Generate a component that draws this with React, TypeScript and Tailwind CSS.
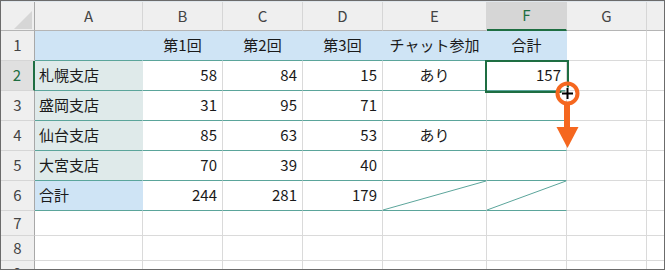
import React from 'react'

const widths = ['w-[34px]', 'w-[108px]', 'w-[80px]', 'w-[80px]', 'w-[80px]', 'w-[104px]', 'w-[80px]', 'w-[80px]']
const letters = ['A', 'B', 'C', 'D', 'E', 'F', 'G']

type Cell = string | number | null | 'DIAG'

const data: Cell[][] = [
  [null, '第1回', '第2回', '第3回', 'チャット参加', '合計'],
  ['札幌支店', 58, 84, 15, 'あり', 157],
  ['盛岡支店', 31, 95, 71, null, null],
  ['仙台支店', 85, 63, 53, 'あり', null],
  ['大宮支店', 70, 39, 40, null, null],
  ['合計', 244, 281, 179, 'DIAG', 'DIAG'],
]

const Diagonal: React.FC = () => (
  <svg className="absolute inset-0 w-full h-full" preserveAspectRatio="none" viewBox="0 0 100 100">
    <line x1="0" y1="100" x2="100" y2="0" stroke="#5ba59b" strokeWidth="1" vectorEffect="non-scaling-stroke" />
  </svg>
)

function cellBg(r: number, c: number) {
  if (r === 0 && c <= 5) return 'bg-[#cfe4f5] border-r-[#cfe4f5]'
  if (r === 5 && c === 0) return 'bg-[#cfe4f5] border-r-[#cfe4f5]'
  if (c === 0) return 'bg-[#dfeaea] border-r-[#dfeaea]'
  return 'bg-white border-r-[#dadada]'
}

const App: React.FC = () => {
  return (
    <div
      className="w-[665px] h-[270px] border border-[#6b6b6b] overflow-hidden relative bg-white text-[15px] text-[#1a1a1a]"
      style={{ fontFamily: '"Noto Sans CJK JP", "Noto Sans", sans-serif' }}
    >
      {/* column header */}
      <div className="flex h-[30px] bg-[#efefef] border-t border-t-[#dfe6ec]">
        <div className="w-[34px] shrink-0 border-r border-r-[#a8a8a8] border-b border-b-[#b5b5b5] relative">
          <svg className="absolute left-[13px] top-[9px]" width="18" height="18" viewBox="0 0 18 18">
            <polygon points="18,0 18,18 0,18" fill="#d6d6d6" />
          </svg>
        </div>
        {letters.map((l, i) => (
          <div
            key={l}
            className={`${widths[i + 1]} shrink-0 flex items-center justify-center border-r border-r-[#d6d6d6] ${
              l === 'F'
                ? 'bg-[#d6d6d6] text-[#1e6e42] border-b-2 border-b-[#1e6e42]'
                : 'text-[#444] border-b border-b-[#b5b5b5]'
            }`}
          >
            {l}
          </div>
        ))}
        <div className="flex-1 border-b border-b-[#b5b5b5]" />
      </div>

      {/* table rows */}
      {data.map((row, r) => (
        <div key={r} className="flex h-[30px]">
          <div
            className={`w-[34px] shrink-0 flex items-center justify-center border-b border-b-[#d6d6d6] ${
              r === 1
                ? 'bg-[#e0e0e0] text-[#1e6e42] border-r-2 border-r-[#1e6e42]'
                : 'bg-[#efefef] text-[#444] border-r border-r-[#a8a8a8]'
            }`}
          >
            {r + 1}
          </div>
          {row.map((v, c) => {
            const isNum = typeof v === 'number'
            const align =
              c === 0 ? 'justify-start pl-[4px]' : isNum ? 'justify-end pr-[5px]' : 'justify-center'
            return (
              <div
                key={c}
                className={`${widths[c + 1]} shrink-0 relative flex items-center border-r border-b border-b-[#5ba59b] ${align} ${cellBg(r, c)}`}
              >
                {v === 'DIAG' ? <Diagonal /> : v}
              </div>
            )
          })}
          <div className="w-[80px] shrink-0 border-r border-b border-[#dadada]" />
          <div className="flex-1 border-b border-[#dadada]" />
        </div>
      ))}

      {[7, 8, 9].map((n) => (
        <div key={n} className="flex h-[25px]">
          <div className="w-[34px] shrink-0 flex items-center justify-center bg-[#efefef] text-[#444] border-r border-r-[#a8a8a8] border-b border-b-[#d6d6d6]">
            {n}
          </div>
          {widths.slice(1).map((w, i) => (
            <div key={i} className={`${w} shrink-0 border-r border-b border-[#dadada]`} />
          ))}
          <div className="flex-1 border-b border-[#dadada]" />
        </div>
      ))}

      {/* selected cell F2 */}
      <div className="absolute left-[484px] top-[59px] w-[84px] h-[33px] border-2 border-[#1e6e42]" />

      {/* drag annotation */}
      <svg className="absolute left-0 top-0 pointer-events-none" width="665" height="270">
        <rect x="563" y="102" width="6" height="26" fill="#f5671f" />
        <polygon points="555.5,126 577.5,126 566.5,147" fill="#f5671f" />
        <circle cx="566.5" cy="92.5" r="10" fill="none" stroke="#f5671f" strokeWidth="4" />
        <path d="M560.5 92.5 H572.5 M566.5 86.5 V98.5" stroke="#fff" strokeWidth="4" />
        <path d="M561 92.5 H572 M566.5 87 V98" stroke="#000" strokeWidth="2" />
      </svg>
    </div>
  )
}

export default App
